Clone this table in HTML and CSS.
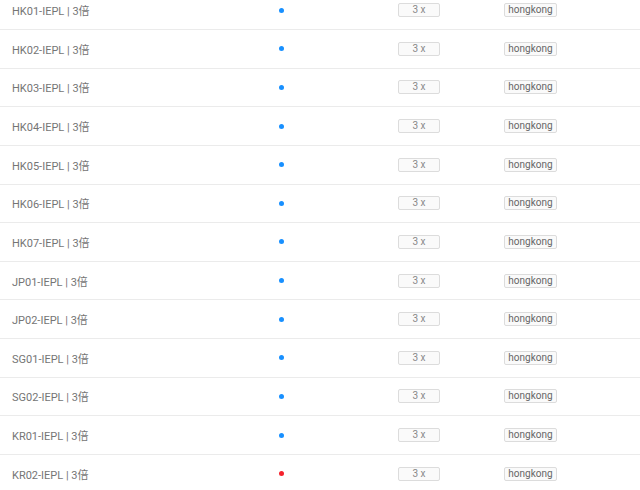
FILE: index.html
```html
<!DOCTYPE html>
<html>
<head>
<meta charset="utf-8">
<link rel="stylesheet" href="styles.css">
</head>
<body>
<div class="list">
  <div class="row"><span class="name">HK01-IEPL | 3倍</span><span class="dot"></span><span></span><span class="tag rate">3 x</span><span class="tag region">hongkong</span></div>
  <div class="row"><span class="name">HK02-IEPL | 3倍</span><span class="dot"></span><span></span><span class="tag rate">3 x</span><span class="tag region">hongkong</span></div>
  <div class="row"><span class="name">HK03-IEPL | 3倍</span><span class="dot"></span><span></span><span class="tag rate">3 x</span><span class="tag region">hongkong</span></div>
  <div class="row"><span class="name">HK04-IEPL | 3倍</span><span class="dot"></span><span></span><span class="tag rate">3 x</span><span class="tag region">hongkong</span></div>
  <div class="row"><span class="name">HK05-IEPL | 3倍</span><span class="dot"></span><span></span><span class="tag rate">3 x</span><span class="tag region">hongkong</span></div>
  <div class="row"><span class="name">HK06-IEPL | 3倍</span><span class="dot"></span><span></span><span class="tag rate">3 x</span><span class="tag region">hongkong</span></div>
  <div class="row"><span class="name">HK07-IEPL | 3倍</span><span class="dot"></span><span></span><span class="tag rate">3 x</span><span class="tag region">hongkong</span></div>
  <div class="row"><span class="name">JP01-IEPL | 3倍</span><span class="dot"></span><span></span><span class="tag rate">3 x</span><span class="tag region">hongkong</span></div>
  <div class="row"><span class="name">JP02-IEPL | 3倍</span><span class="dot"></span><span></span><span class="tag rate">3 x</span><span class="tag region">hongkong</span></div>
  <div class="row"><span class="name">SG01-IEPL | 3倍</span><span class="dot"></span><span></span><span class="tag rate">3 x</span><span class="tag region">hongkong</span></div>
  <div class="row"><span class="name">SG02-IEPL | 3倍</span><span class="dot"></span><span></span><span class="tag rate">3 x</span><span class="tag region">hongkong</span></div>
  <div class="row"><span class="name">KR01-IEPL | 3倍</span><span class="dot"></span><span></span><span class="tag rate">3 x</span><span class="tag region">hongkong</span></div>
  <div class="row"><span class="name">KR02-IEPL | 3倍</span><span class="dot off"></span><span></span><span class="tag rate">3 x</span><span class="tag region">hongkong</span></div>
</div>
</body>
</html>
```
FILE: styles.css
```css
html, body {
  margin: 0;
  padding: 0;
  background: #fff;
  overflow: hidden;
}
body {
  font-family: Roboto, "Noto Sans CJK SC", sans-serif;
  color: #666;
}
.list {
  margin-top: -8.6px;
}
.row {
  display: grid;
  grid-template-columns: 270px 23px 105px 106px 1fr;
  align-items: center;
  height: 38.64px;
  box-sizing: border-box;
  border-bottom: 1px solid #ebebeb;
}
.name {
  padding-left: 12px;
  font-size: 11px;
  color: #757575;
  white-space: nowrap;
}
.dot {
  justify-self: center;
  width: 5px;
  height: 5px;
  border-radius: 50%;
  background: #1890ff;
}
.dot.off {
  background: #f5222d;
}
.tag {
  justify-self: start;
  box-sizing: border-box;
  height: 14px;
  line-height: 12px;
  font-size: 10px;
  border: 1px solid #dcdcdc;
  border-radius: 2px;
  background: #fafafa;
  text-align: center;
}
.rate {
  width: 42px;
  color: #888;
}
.region {
  width: 53px;
  color: #666;
}
```
